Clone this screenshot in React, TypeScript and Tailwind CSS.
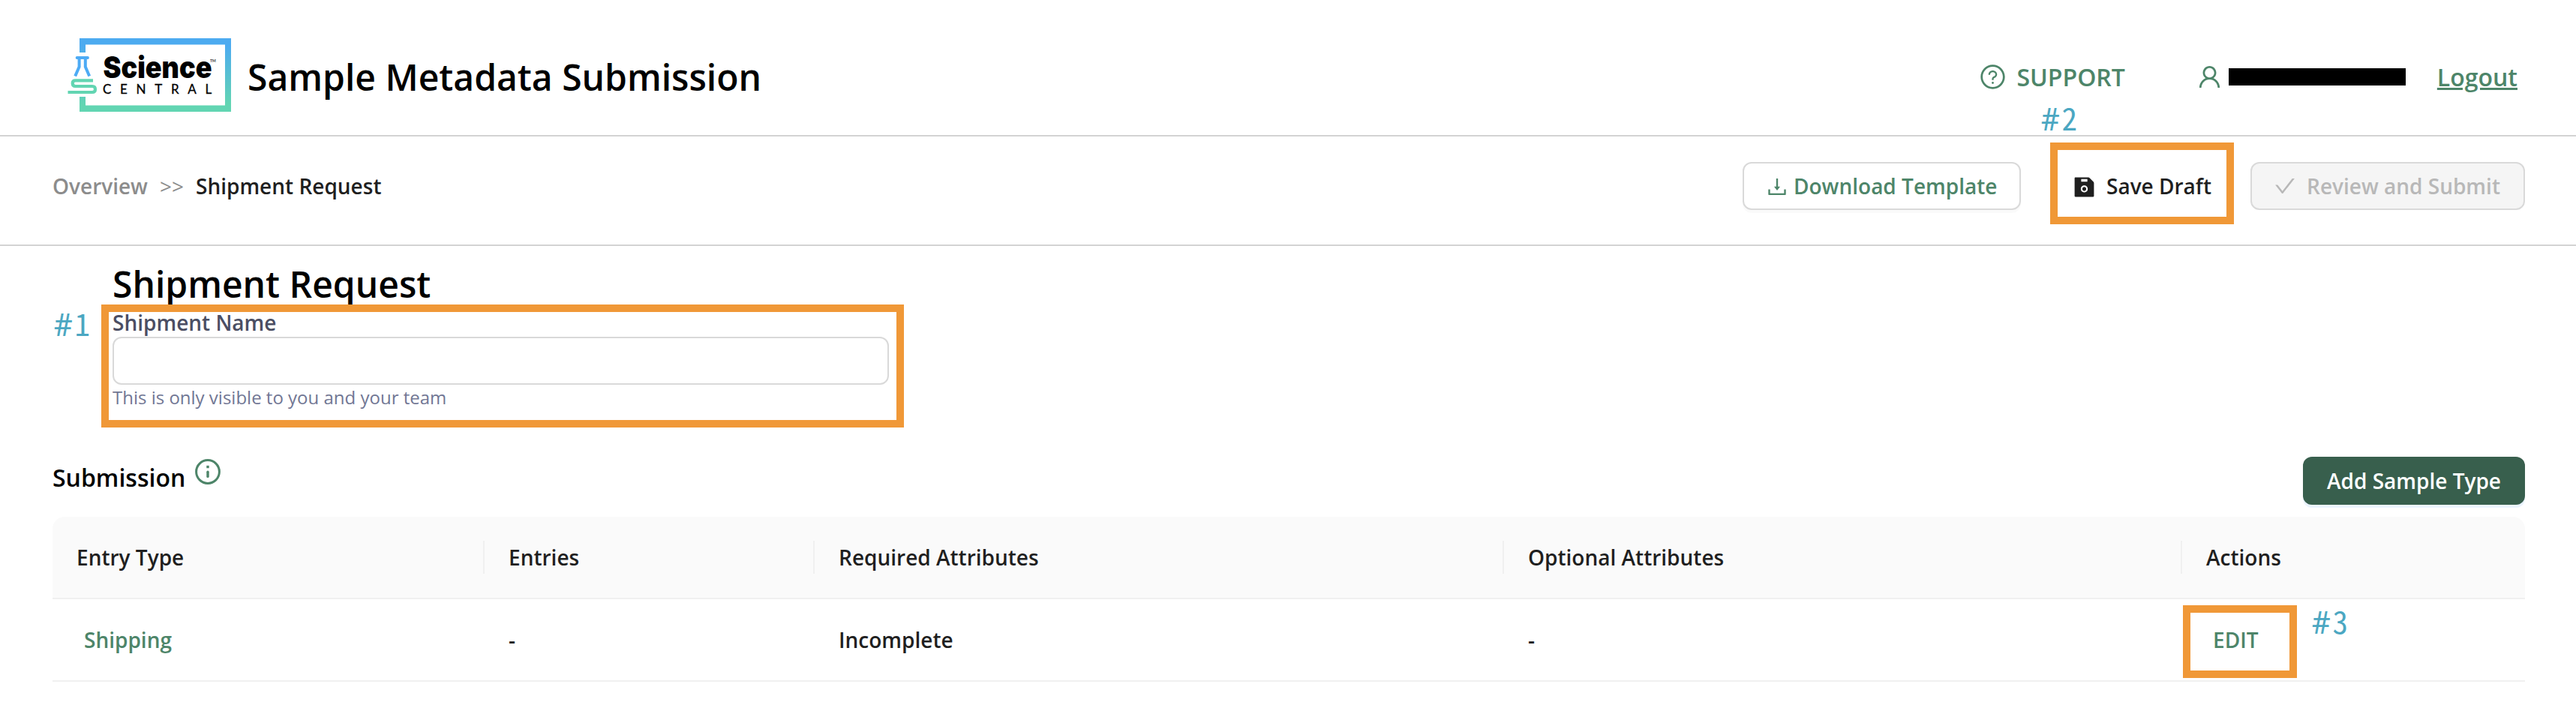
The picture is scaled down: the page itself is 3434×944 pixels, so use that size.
import React from "react";
import {
  AiOutlineQuestionCircle,
  AiOutlineUser,
  AiOutlineDownload,
  AiFillSave,
  AiOutlineCheck,
} from "react-icons/ai";

function Logo() {
  return (
    <svg width="222" height="104" viewBox="0 0 222 104" className="block shrink-0">
      <defs>
        <linearGradient id="frame" x1="0" y1="3" x2="0" y2="101" gradientUnits="userSpaceOnUse">
          <stop offset="0.1" stopColor="#4dabf0" />
          <stop offset="0.9" stopColor="#62d5b2" />
        </linearGradient>
      </defs>
      <path d="M18 22V3H220V101H18V81H26V92.5H212V11.5H26V22Z" fill="url(#frame)" />
      <path d="M14.6 29H29" fill="none" stroke="#4dabf5" strokeWidth="3.8" strokeLinecap="round" />
      <path d="M17.6 29V41L12.2 53.5M25.8 29V41L31.2 53.5" fill="none" stroke="#4dabf5" strokeWidth="4" />
      <path d="M36 59.3H12.5Q8.700 59.3 8.700 63.1Q8.700 67 12.5 67H35Q39 67 39 71Q39 75 35 75H2.500" fill="none" stroke="#62d5b2" strokeWidth="4.2" />
      <text x="49.5" y="56" fontFamily="Inter" fontWeight="900" fontSize="39.5" textLength="145" lengthAdjust="spacingAndGlyphs" fill="#000">Science</text>
      <text x="49" y="76.5" fontFamily="Lato" fontWeight="400" fontSize="17" letterSpacing="11.3" textLength="156.5" fill="#000" stroke="#000" strokeWidth="0.3">CENTRAL</text>
      <text x="192" y="35" fontFamily="Lato" fontSize="5" fill="#000">TM</text>
    </svg>
  );
}

function InfoIcon() {
  return (
    <svg width="34" height="34" viewBox="0 0 34 34" className="block">
      <circle cx="17" cy="17" r="15.4" fill="none" stroke="#4d8569" strokeWidth="3" />
      <path d="M17 8.8V12.2" stroke="#4d8569" strokeWidth="3.4" />
      <path d="M17 17.2V23.4" stroke="#4d8569" strokeWidth="3.4" strokeLinecap="round" />
    </svg>
  );
}

function Callout({ digit, className }: { digit: string; className: string }) {
  return (
    <span className={`absolute font-['Noto_Sans_Mono'] text-[41px] leading-[48px] font-normal whitespace-nowrap text-[#4ba7c2] ${className}`}>
      #<span className="ml-[3px] font-['Noto_Sans_Mono_CJK_SC'] leading-none">{digit}</span>
    </span>
  );
}

function Header() {
  return (
    <header className="flex h-[182px] items-center justify-between border-b-2 border-[#d3d3d3] pt-[25px] pr-[78px] pl-[88px]">
      <div className="flex items-center">
        <div className="-mt-[5px]">
          <Logo />
        </div>
        <h1 className="ml-[20px] text-[48px] leading-[60px] font-semibold whitespace-nowrap text-black">Sample Metadata Submission</h1>
      </div>
      <div className="flex items-center text-[32px] leading-[40px] text-[#4d8569]">
        <AiOutlineQuestionCircle className="h-[37px] w-[37px]" />
        <span className="ml-[13px]">SUPPORT</span>
        <AiOutlineUser className="ml-[94px] h-[37px] w-[37px]" />
        <span className="ml-[7px] h-[23px] w-[236px] bg-black" />
        <a className="ml-[42px] underline">Logout</a>
      </div>
    </header>
  );
}

const columns = ["Entry Type", "Entries", "Required Attributes", "Optional Attributes", "Actions"];

export default function App() {
  return (
    <div className="relative h-[944px] w-[3434px] overflow-hidden bg-white font-['Open_Sans'] text-[28px] font-semibold text-[#1f1f1f]">
      <Header />

      <div className="flex h-[146px] items-center justify-between border-b-2 border-[#d3d3d3] pr-[68px] pb-[12px] pl-[70px]">
        <nav className="flex items-center whitespace-nowrap">
          <span className="text-[#8c8c8c]">Overview</span>
          <span className="mx-[16px] font-normal text-[#8c8c8c]">&gt;&gt;</span>
          <span>Shipment Request</span>
        </nav>
        <div className="flex items-center whitespace-nowrap">
          <button className="flex h-[64px] w-[371px] items-center rounded-[12px] border-2 border-[#d9d9d9] bg-white pl-[28px] text-[#4d8569] shadow-[0_4px_0_rgba(0,0,0,0.02)]">
            <AiOutlineDownload className="mt-[2px] h-[32px] w-[32px]" />
            <span className="ml-[6px]">Download Template</span>
          </button>
          <button className="-mt-[7px] ml-[39px] flex h-[109px] w-[245px] items-center border-[10px] border-[#f09837] pt-[7px] pl-[19px]">
            <AiFillSave className="mt-[2px] h-[33px] w-[33px]" />
            <span className="ml-[13px]">Save Draft</span>
          </button>
          <button className="ml-[22px] flex h-[64px] w-[366px] items-center rounded-[12px] border-2 border-[#d9d9d9] bg-[#f5f5f5] pl-[28px] text-[#b8b8b8]">
            <AiOutlineCheck className="h-[32px] w-[32px]" />
            <span className="ml-[13px]">Review and Submit</span>
          </button>
        </div>
      </div>

      <section className="relative pt-[21px] pl-[150px]">
        <h2 className="text-[48px] leading-[60px] font-semibold text-black">Shipment Request</h2>
        <label className="mt-[2px] block leading-[38px] text-[#4b4e63]">Shipment Name</label>
        <input className="block h-[64px] w-[1035px] rounded-[12px] border-2 border-[#d9d9d9] bg-white" />
        <p className="text-[24px] leading-[34px] font-normal text-[#717794]">This is only visible to you and your team</p>
        <div className="absolute top-[78px] left-[135px] h-[164px] w-[1070px] border-[10px] border-[#f09837]" />
        <Callout digit="1" className="top-[80px] left-[72px]" />
      </section>

      <section className="mt-[62px] pr-[68px] pl-[70px]">
        <div className="flex h-[64px] items-start justify-between">
          <div className="flex">
            <h3 className="mt-[8px] text-[32px] leading-[40px] font-semibold text-black">Submission</h3>
            <div className="mt-[3px] ml-[13px]">
              <InfoIcon />
            </div>
          </div>
          <button className="flex h-[64px] w-[296px] items-center justify-center rounded-[12px] bg-[#385f4d] text-white shadow-[0_4px_0_#ebf4ff]">Add Sample Type</button>
        </div>

        <div className="mt-[16px]">
          <div className="grid h-[110px] grid-cols-[576px_440px_919px_904px_1fr] items-center overflow-hidden rounded-t-[16px] border-b-2 border-[#f0f0f0] bg-[#fafafa]">
            {columns.map((name, i) => (
              <div
                key={name}
                className={
                  i < columns.length - 1
                    ? "flex h-[44px] items-center border-r-2 border-[#f0f0f0] pl-[32px]"
                    : "flex h-[44px] items-center pl-[32px]"
                }
              >
                {name}
              </div>
            ))}
          </div>
          <div className="grid h-[110px] grid-cols-[576px_440px_919px_904px_1fr] items-center border-b-2 border-[#f0f0f0]">
            <div className="pl-[42px] text-[#4d8569]">Shipping</div>
            <div className="pl-[32px]">-</div>
            <div className="pl-[32px]">Incomplete</div>
            <div className="pl-[32px]">-</div>
            <div className="relative flex h-full items-center pl-[41px] text-[#4d8569]">
              EDIT
              <div className="absolute top-[8px] left-[1px] h-[97px] w-[152px] border-[10px] border-[#f09837]" />
              <Callout digit="3" className="top-[6px] left-[173px]" />
            </div>
          </div>
        </div>
      </section>

      <Callout digit="2" className="top-[134px] left-[2721px]" />
    </div>
  );
}
